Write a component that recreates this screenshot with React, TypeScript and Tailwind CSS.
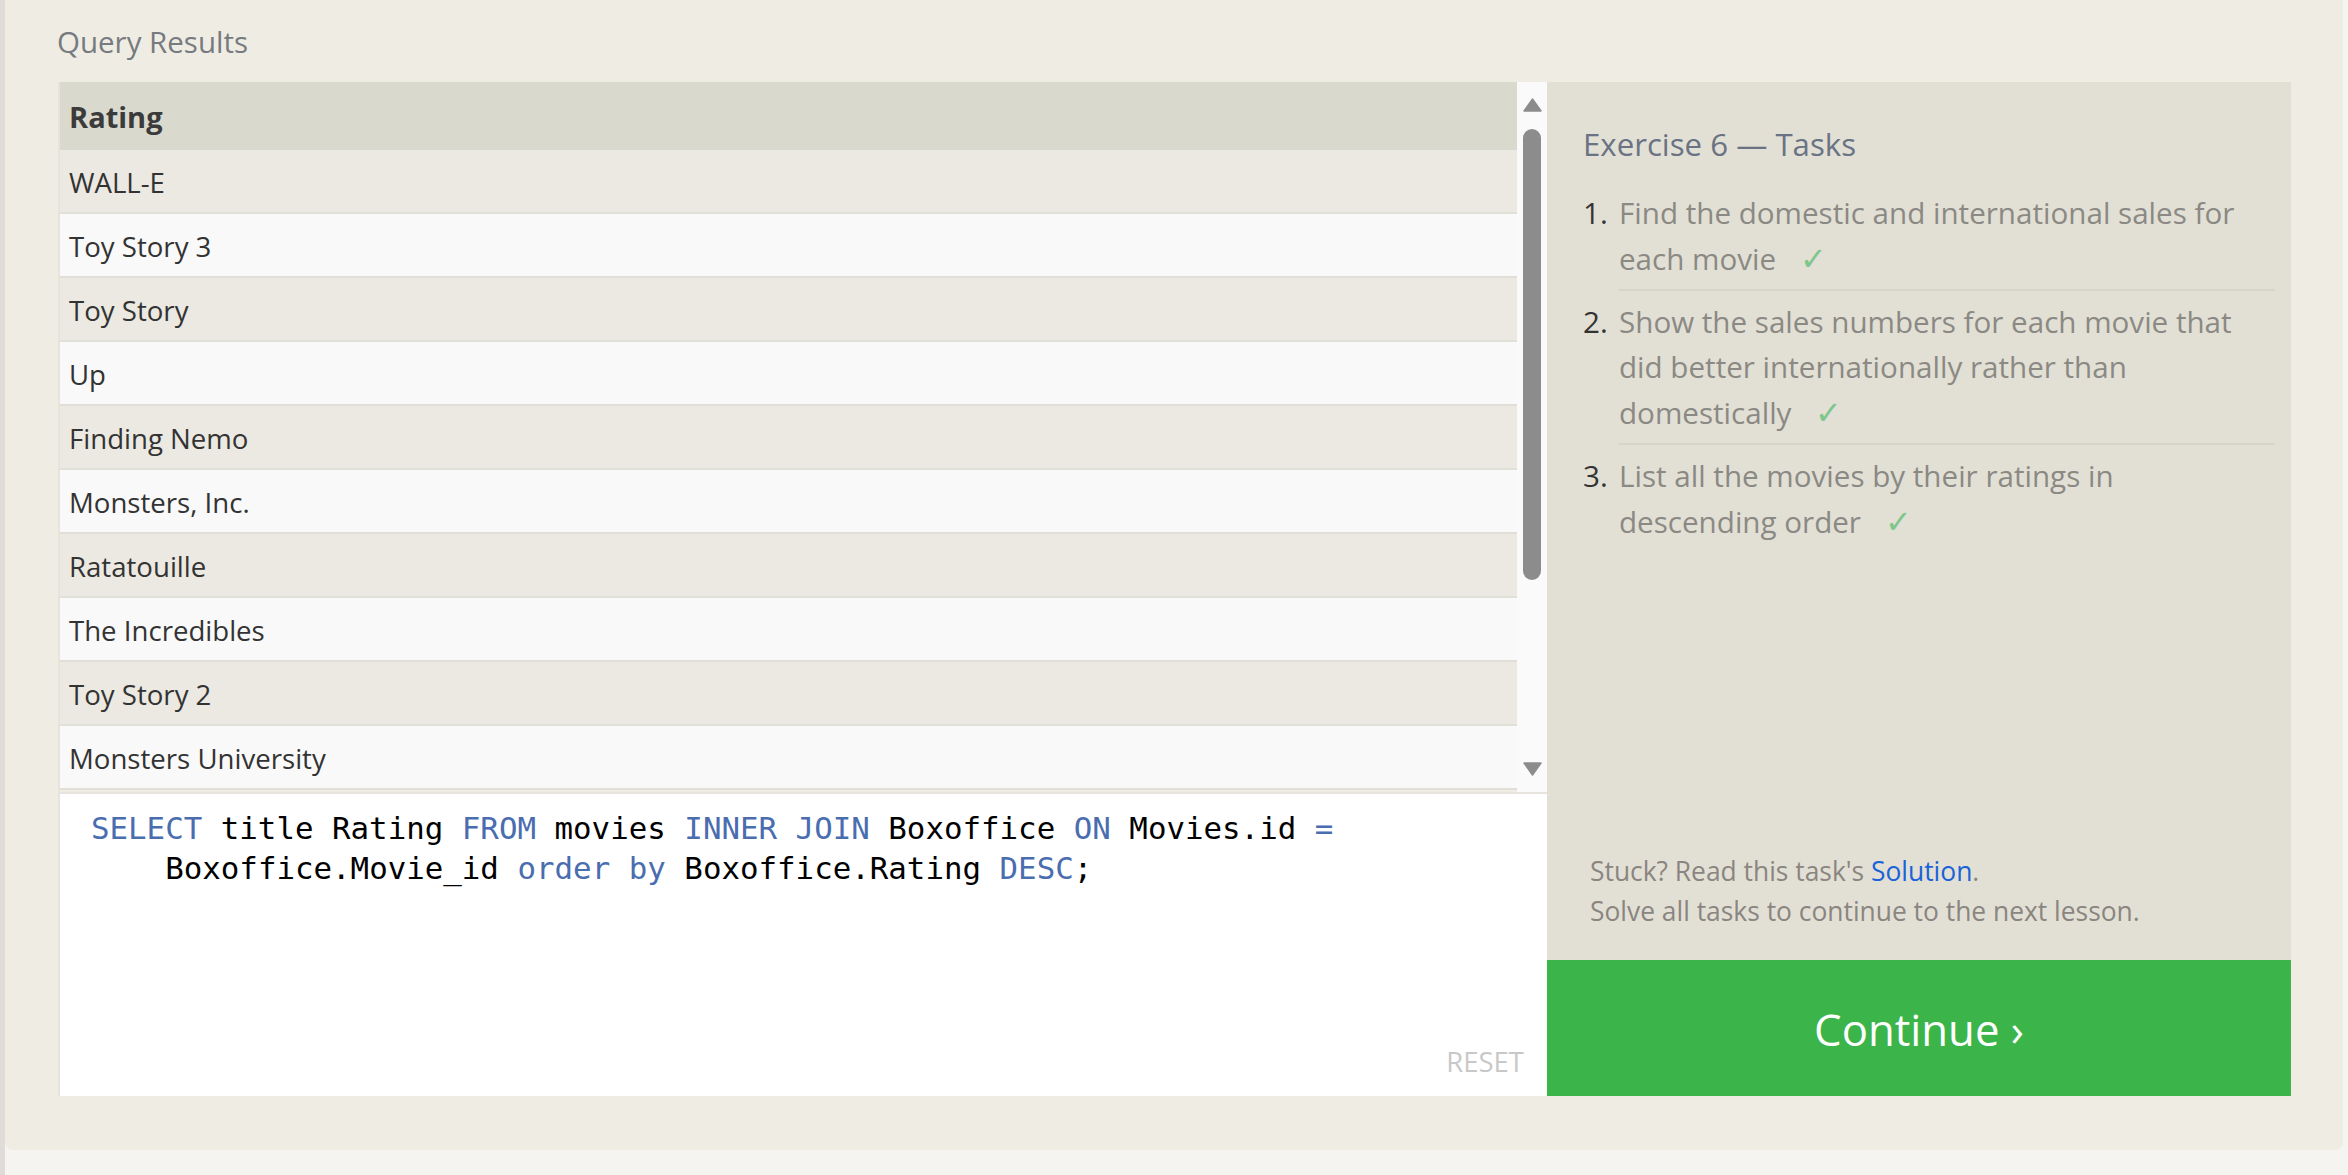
import React from 'react';

const movies = [
  'WALL-E',
  'Toy Story 3',
  'Toy Story',
  'Up',
  'Finding Nemo',
  'Monsters, Inc.',
  'Ratatouille',
  'The Incredibles',
  'Toy Story 2',
  'Monsters University',
];

const Check = () => <span className="ml-[16px] text-[32px] text-[#7fc68c]">✓</span>;

const Kw: React.FC<{ children: React.ReactNode }> = ({ children }) => (
  <span className="text-[#4a6db0]">{children}</span>
);

const App: React.FC = () => {
  return (
    <div className="min-h-[1175px] flex bg-[#f5f4f0] font-['Open_Sans',sans-serif]">
      <div className="w-[5px] shrink-0 bg-[#e0dbd8]" />

      <div className="flex-1 mr-[5px] self-start bg-[#efece4] rounded-b-lg pl-[53px] pr-[52px] pt-[22px] pb-[54px]">
        <h2 className="text-[29.5px] leading-[40px] text-[#777a7e] mb-[20px] -ml-[1px]">Query Results</h2>

        <div className="flex h-[1014px]">
          {/* left column: results + editor */}
          <div className="w-[1489px] flex flex-col border-l-2 border-[#e6e4dc]">
            <div className="flex h-[710px]">
              <div className="flex-1 flex flex-col">
                <div className="h-[68px] bg-[#dad9cd] flex items-center pl-[9px] pt-[2px] text-[29px] font-bold text-[#3b3b3b]">
                  Rating
                </div>
                {movies.map((m, i) => (
                  <div
                    key={m}
                    className={`h-[64px] shrink-0 border-b-2 border-[#e0dfd8] flex items-center pl-[9px] pt-[3px] text-[27.6px] text-[#333] ${
                      i % 2 === 0 ? 'bg-[#ebe9e1]' : 'bg-[#f9f9f9]'
                    }`}
                  >
                    {m}
                  </div>
                ))}
              </div>
              <div className="w-[30px] bg-[#fafafa] flex flex-col items-center pt-[16px] pb-[16px]">
                <svg width="19" height="14" viewBox="0 0 19 14">
                  <path d="M9.5 1 L18 13 L1 13 Z" fill="#8c8c8c" strokeLinejoin="round" stroke="#8c8c8c" strokeWidth="1.5" />
                </svg>
                <div className="w-[18px] h-[451px] mt-[17px] rounded-full bg-[#8c8c8c]" />
                <div className="flex-1" />
                <svg width="19" height="14" viewBox="0 0 19 14">
                  <path d="M1 1 L18 1 L9.5 13 Z" fill="#8c8c8c" strokeLinejoin="round" stroke="#8c8c8c" strokeWidth="1.5" />
                </svg>
              </div>
            </div>

            <div className="flex-1 bg-white border-t-2 border-[#e6e4dc] flex flex-col pl-[31px] pr-[23px] pt-[14px] pb-[17px]">
              <pre className="flex-1 font-['DejaVu_Sans_Mono',monospace] text-[30.8px] leading-[40px] text-black whitespace-pre">
                <Kw>SELECT</Kw> title Rating <Kw>FROM</Kw> movies <Kw>INNER JOIN</Kw> Boxoffice <Kw>ON</Kw> Movies.id <Kw>=</Kw>
                {'\n    '}Boxoffice.Movie_id <Kw>order by</Kw> Boxoffice.Rating <Kw>DESC</Kw>;
              </pre>
              <div className="flex justify-end text-[27.5px] leading-[34px] text-[#c8c8c8]">RESET</div>
            </div>
          </div>

          {/* right column: tasks */}
          <div className="flex-1 bg-[#e2e0d5] flex flex-col">
            <div className="pl-[36px] pr-[16px] pt-[40px]">
              <h3 className="text-[31.2px] leading-[44px] text-[#6a7383]">Exercise 6 — Tasks</h3>
              <ol className="mt-[24px] text-[29.6px] leading-[45px] text-[#8b8984]">
                <li className="flex">
                  <span className="w-[36px] shrink-0 text-[#333]">1.</span>
                  <div className="flex-1 pb-[8px] border-b-2 border-[#d7d5ca]">
                    Find the domestic and international sales for
                    <br />
                    each movie <Check />
                  </div>
                </li>
                <li className="flex">
                  <span className="w-[36px] shrink-0 pt-[8px] text-[#333]">2.</span>
                  <div className="flex-1 py-[8px] border-b-2 border-[#d7d5ca]">
                    Show the sales numbers for each movie that
                    <br />
                    did better internationally rather than
                    <br />
                    domestically <Check />
                  </div>
                </li>
                <li className="flex">
                  <span className="w-[36px] shrink-0 pt-[8px] text-[#333]">3.</span>
                  <div className="flex-1 pt-[8px]">
                    List all the movies by their ratings in
                    <br />
                    descending order <Check />
                  </div>
                </li>
              </ol>
            </div>

            <div className="mt-auto px-[43px] pb-[29px] text-[26.4px] leading-[40px] text-[#8a8580]">
              <p>
                Stuck? Read this task's <span className="text-[#1a62d8]">Solution</span>.
              </p>
              <p>Solve all tasks to continue to the next lesson.</p>
            </div>

            <button className="h-[136px] w-full pt-[4px] bg-[#3bb54a] text-white text-[43.7px] flex items-center justify-center">
              Continue ›
            </button>
          </div>
        </div>
      </div>
    </div>
  );
};

export default App;
